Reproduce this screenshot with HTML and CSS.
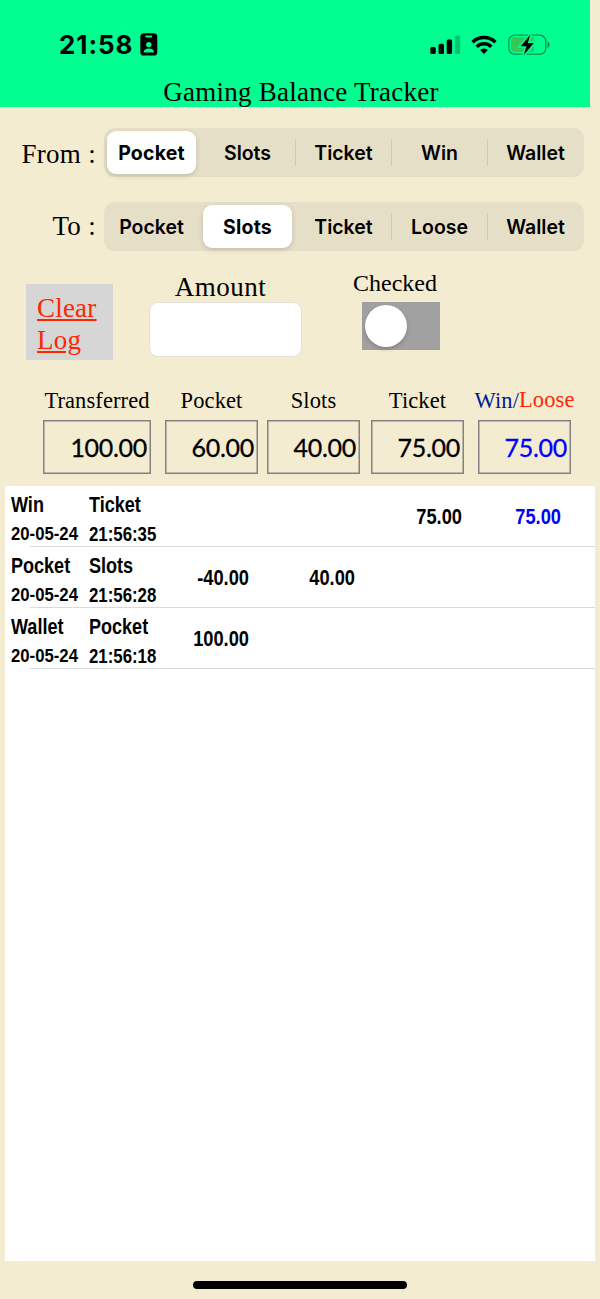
FILE: index.html
```
<!DOCTYPE html>
<html lang="en">
<head>
<meta charset="UTF-8">
<meta name="viewport" content="width=device-width, initial-scale=1.0">
<title>Gaming Balance Tracker</title>
<link rel="stylesheet" href="styles.css">
</head>
<body>
<header class="header">
  <div class="status-bar">
    <span class="clock">21:58</span>
    <svg class="badge-icon" width="18" height="23" viewBox="0 0 18 23">
      <rect x="0.3" y="0.3" width="17" height="22.2" rx="3.6"/>
      <rect x="5.2" y="2.6" width="7" height="1.8" rx="0.9" fill="#00ff90"/>
      <circle cx="8.8" cy="11.6" r="2.7" fill="#00ff90"/>
      <path d="M3.6 19.6c0-2.8 2.2-4.2 5.2-4.2s5.2 1.4 5.2 4.2z" fill="#00ff90"/>
    </svg>
    <svg class="signal-icon" width="31" height="20" viewBox="0 0 31 20">
      <rect x="0.3" y="12" width="5.4" height="7" rx="1.5"/>
      <rect x="8.6" y="8.7" width="5.4" height="10.3" rx="1.5"/>
      <rect x="16.7" y="4.5" width="5.4" height="14.5" rx="1.5"/>
      <rect x="24.8" y="0.4" width="5.4" height="18.6" rx="1.5" opacity=".22"/>
    </svg>
    <svg class="wifi-icon" width="26" height="20" viewBox="0 0 26 20">
      <path d="M1.600 7.200a16.400 16.400 0 0 1 22.800 0M5.700 11.800a10.500 10.500 0 0 1 14.600 0" fill="none" stroke="#000" stroke-width="3.500"/>
      <path d="M13 19l-3.900-4a5.600 5.600 0 0 1 7.800 0z"/>
    </svg>
    <svg class="battery-icon" width="42" height="22" viewBox="0 0 42 22">
      <rect x="0.8" y="1.2" width="37" height="19" rx="6" fill="none" stroke="#000" stroke-opacity=".42" stroke-width="1.3"/>
      <path d="M7 3.300h19v14.800H7a4 4 0 0 1-4-4V7.300a4 4 0 0 1 4-4z" fill="#34c759"/>
      <path d="M39.700 7.500c2.300 1.300 2.300 5.200 0 6.400z" opacity=".5"/>
      <path d="M22.300.6L12.700 12.200h5.700l-2.600 8.700 10-12h-6z" stroke="#00ff90" stroke-width="3.200" paint-order="stroke"/>
    </svg>
  </div>
  <h1 class="title">Gaming Balance Tracker</h1>
</header>

<main>
  <div class="transfer-row">
    <span class="transfer-label">From :</span>
    <div class="segments">
      <span class="segment selected">Pocket</span>
      <span class="segment">Slots</span>
      <span class="segment divided">Ticket</span>
      <span class="segment divided">Win</span>
      <span class="segment divided">Wallet</span>
    </div>
  </div>
  <div class="transfer-row">
    <span class="transfer-label">To :</span>
    <div class="segments">
      <span class="segment">Pocket</span>
      <span class="segment selected">Slots</span>
      <span class="segment">Ticket</span>
      <span class="segment divided">Loose</span>
      <span class="segment divided">Wallet</span>
    </div>
  </div>

  <div class="controls">
    <a class="clear-log">Clear<br>Log</a>
    <div class="amount">
      <label for="amount">Amount</label>
      <input id="amount" type="text">
    </div>
    <div class="checked">
      <span>Checked</span>
      <div class="switch"><div class="knob"></div></div>
    </div>
  </div>

  <div class="totals">
    <div class="total transferred"><span class="total-label">Transferred</span><div class="total-value">100.00</div></div>
    <div class="total pocket"><span class="total-label">Pocket</span><div class="total-value">60.00</div></div>
    <div class="total slots"><span class="total-label">Slots</span><div class="total-value">40.00</div></div>
    <div class="total ticket"><span class="total-label">Ticket</span><div class="total-value">75.00</div></div>
    <div class="total"><span class="total-label"><span class="win">Win/</span><span class="loose">Loose</span></span><div class="total-value blue">75.00</div></div>
  </div>

  <div class="log">
    <div class="entry">
      <div class="place"><span>Win</span><small class="date">20-05-24</small></div>
      <div class="place"><span>Ticket</span><small>21:56:35</small></div>
      <span class="num"></span><span class="num"></span><span class="num">75.00</span><span class="num blue">75.00</span>
    </div>
    <div class="entry">
      <div class="place"><span>Pocket</span><small class="date">20-05-24</small></div>
      <div class="place"><span>Slots</span><small>21:56:28</small></div>
      <span class="num">-40.00</span><span class="num">40.00</span><span class="num"></span><span class="num"></span>
    </div>
    <div class="entry">
      <div class="place"><span>Wallet</span><small class="date">20-05-24</small></div>
      <div class="place"><span>Pocket</span><small>21:56:18</small></div>
      <span class="num">100.00</span><span class="num"></span><span class="num"></span><span class="num"></span>
    </div>
  </div>
</main>

<div class="home-indicator"></div>
</body>
</html>
```
FILE: styles.css
```
* {
  box-sizing: border-box;
}
body {
  margin: 0;
  width: 600px;
  height: 1299px;
  overflow: hidden;
  background: #f4ecd1;
  color: #000;
  font-family: "Liberation Serif", serif;
  display: flex;
  flex-direction: column;
}
.header {
  width: 590px;
  height: 107px;
  background: #00ff90;
}
.status-bar {
  display: flex;
  align-items: center;
  height: 77px;
  padding: 12px 0 0 59px;
}
.clock {
  width: 81px;
  font: bold 26px/30px Inter, sans-serif;
  letter-spacing: 0.9px;
}
.signal-icon {
  margin-left: 272px;
}
.wifi-icon {
  margin-left: 10px;
}
.battery-icon {
  margin-left: 11px;
}
.title {
  margin: 0;
  padding-left: 12px;
  text-align: center;
  font-size: 27px;
  font-weight: normal;
  line-height: 30px;
  letter-spacing: 0.25px;
}
main {
  display: flex;
  flex-direction: column;
}
.transfer-row {
  display: flex;
  align-items: center;
  height: 49px;
  margin-top: 21px;
}
.transfer-row + .transfer-row {
  margin-top: 25px;
}
.transfer-label {
  width: 96px;
  margin-right: 8px;
  padding-top: 4px;
  text-align: right;
  font-size: 27px;
  letter-spacing: 0.3px;
}
.transfer-row + .transfer-row .transfer-label {
  padding-top: 0;
}
.segments {
  display: grid;
  grid-template-columns: repeat(5, 1fr);
  width: 480px;
  height: 49px;
  border-radius: 11px;
  background: #e5dfc7;
  font: 600 19.5px/50px Inter, sans-serif;
  text-align: center;
}
.segment {
  padding-right: 1px;
}
.segment.selected {
  height: 43px;
  margin: 3px 4px 3px 3px;
  padding-right: 0;
  border-radius: 9px;
  background: #fff;
  line-height: 44px;
  font-weight: 700;
  letter-spacing: 0.2px;
  box-shadow: 0 2px 5px rgba(0, 0, 0, .15);
}
.segment.divided {
  background: linear-gradient(#cfcab6, #cfcab6) no-repeat left 11px / 1px 27px;
  margin-left: -1px;
  padding-right: 0;
}
.controls {
  display: flex;
  height: 110px;
  margin-top: 19px;
}
.clear-log {
  width: 87px;
  height: 76px;
  margin: 14px 0 0 26px;
  padding: 8px 0 0 11px;
  background: #d6d6d6;
  color: #ff2600;
  font-size: 27px;
  line-height: 32px;
  letter-spacing: 0.2px;
  text-decoration: underline;
}
.amount {
  display: flex;
  flex-direction: column;
  align-items: center;
  width: 153px;
  margin-left: 36px;
  padding-top: 2px;
  font-size: 27px;
  line-height: 30px;
  letter-spacing: 0.5px;
}
.amount label {
  height: 30px;
  padding-right: 10px;
}
.amount input {
  width: 153px;
  height: 55px;
  border: 1px solid #e3e1da;
  border-radius: 9px;
  background: #fff;
}
.checked {
  width: 86px;
  margin-left: 51px;
  font-size: 24px;
  line-height: 26px;
}
.switch {
  width: 78px;
  height: 48px;
  margin: 6px 0 0 8.5px;
  padding: 3px;
  background: #a1a1a1;
}
.knob {
  width: 42px;
  height: 42px;
  border-radius: 50%;
  background: #fff;
  box-shadow: 0 2px 4px rgba(0, 0, 0, .2);
}
.totals {
  display: flex;
  height: 86px;
  margin: 8px 0 0 43px;
}
.total {
  width: 93px;
}
.total.transferred {
  width: 108px;
  margin-right: 14px;
}
.total.pocket {
  margin-right: 9px;
}
.total.slots {
  margin-right: 11px;
}
.total.ticket {
  margin-right: 14px;
}
.total-label {
  display: flex;
  justify-content: center;
  height: 32px;
  font-size: 22.5px;
  line-height: 26px;
  letter-spacing: 0.1px;
  white-space: nowrap;
}
.win {
  color: #011993;
}
.loose {
  color: #ff2600;
  line-height: 24px;
}
.total-value {
  height: 54px;
  border: 1px solid #868084;
  box-shadow: inset 0 0 0 0.5px #868084;
  padding-right: 3px;
  text-align: right;
  font: 25px/52px Lato, sans-serif;
  -webkit-text-stroke: 0.3px;
  letter-spacing: -0.3px;
}
.total-value.blue,
.num.blue {
  color: #0000ff;
}
.log {
  height: 775px;
  margin: 12px 5px 0;
  background: #fff;
  font: bold 22px/29px "Liberation Sans", sans-serif;
}
.entry {
  display: grid;
  grid-template-columns: 78px 80px 80px 106px 107px 99px;
  height: 61px;
  padding: 4px 0 0 6px;
  background: linear-gradient(#dadada, #dadada) no-repeat 25px bottom / 565px 1px;
}
.place span,
.place small {
  display: block;
  width: max-content;
  transform: scaleX(.82);
  transform-origin: left;
}
.place small {
  font-size: 20.5px;
}
.place .date {
  font-size: 19px;
  transform: scaleX(.88);
}
.num {
  text-align: right;
  line-height: 53px;
  transform: scaleX(.83);
  transform-origin: right;
}
.home-indicator {
  width: 214px;
  height: 8px;
  margin: 20px 0 0 193px;
  border-radius: 4px;
  background: #000;
}
```
